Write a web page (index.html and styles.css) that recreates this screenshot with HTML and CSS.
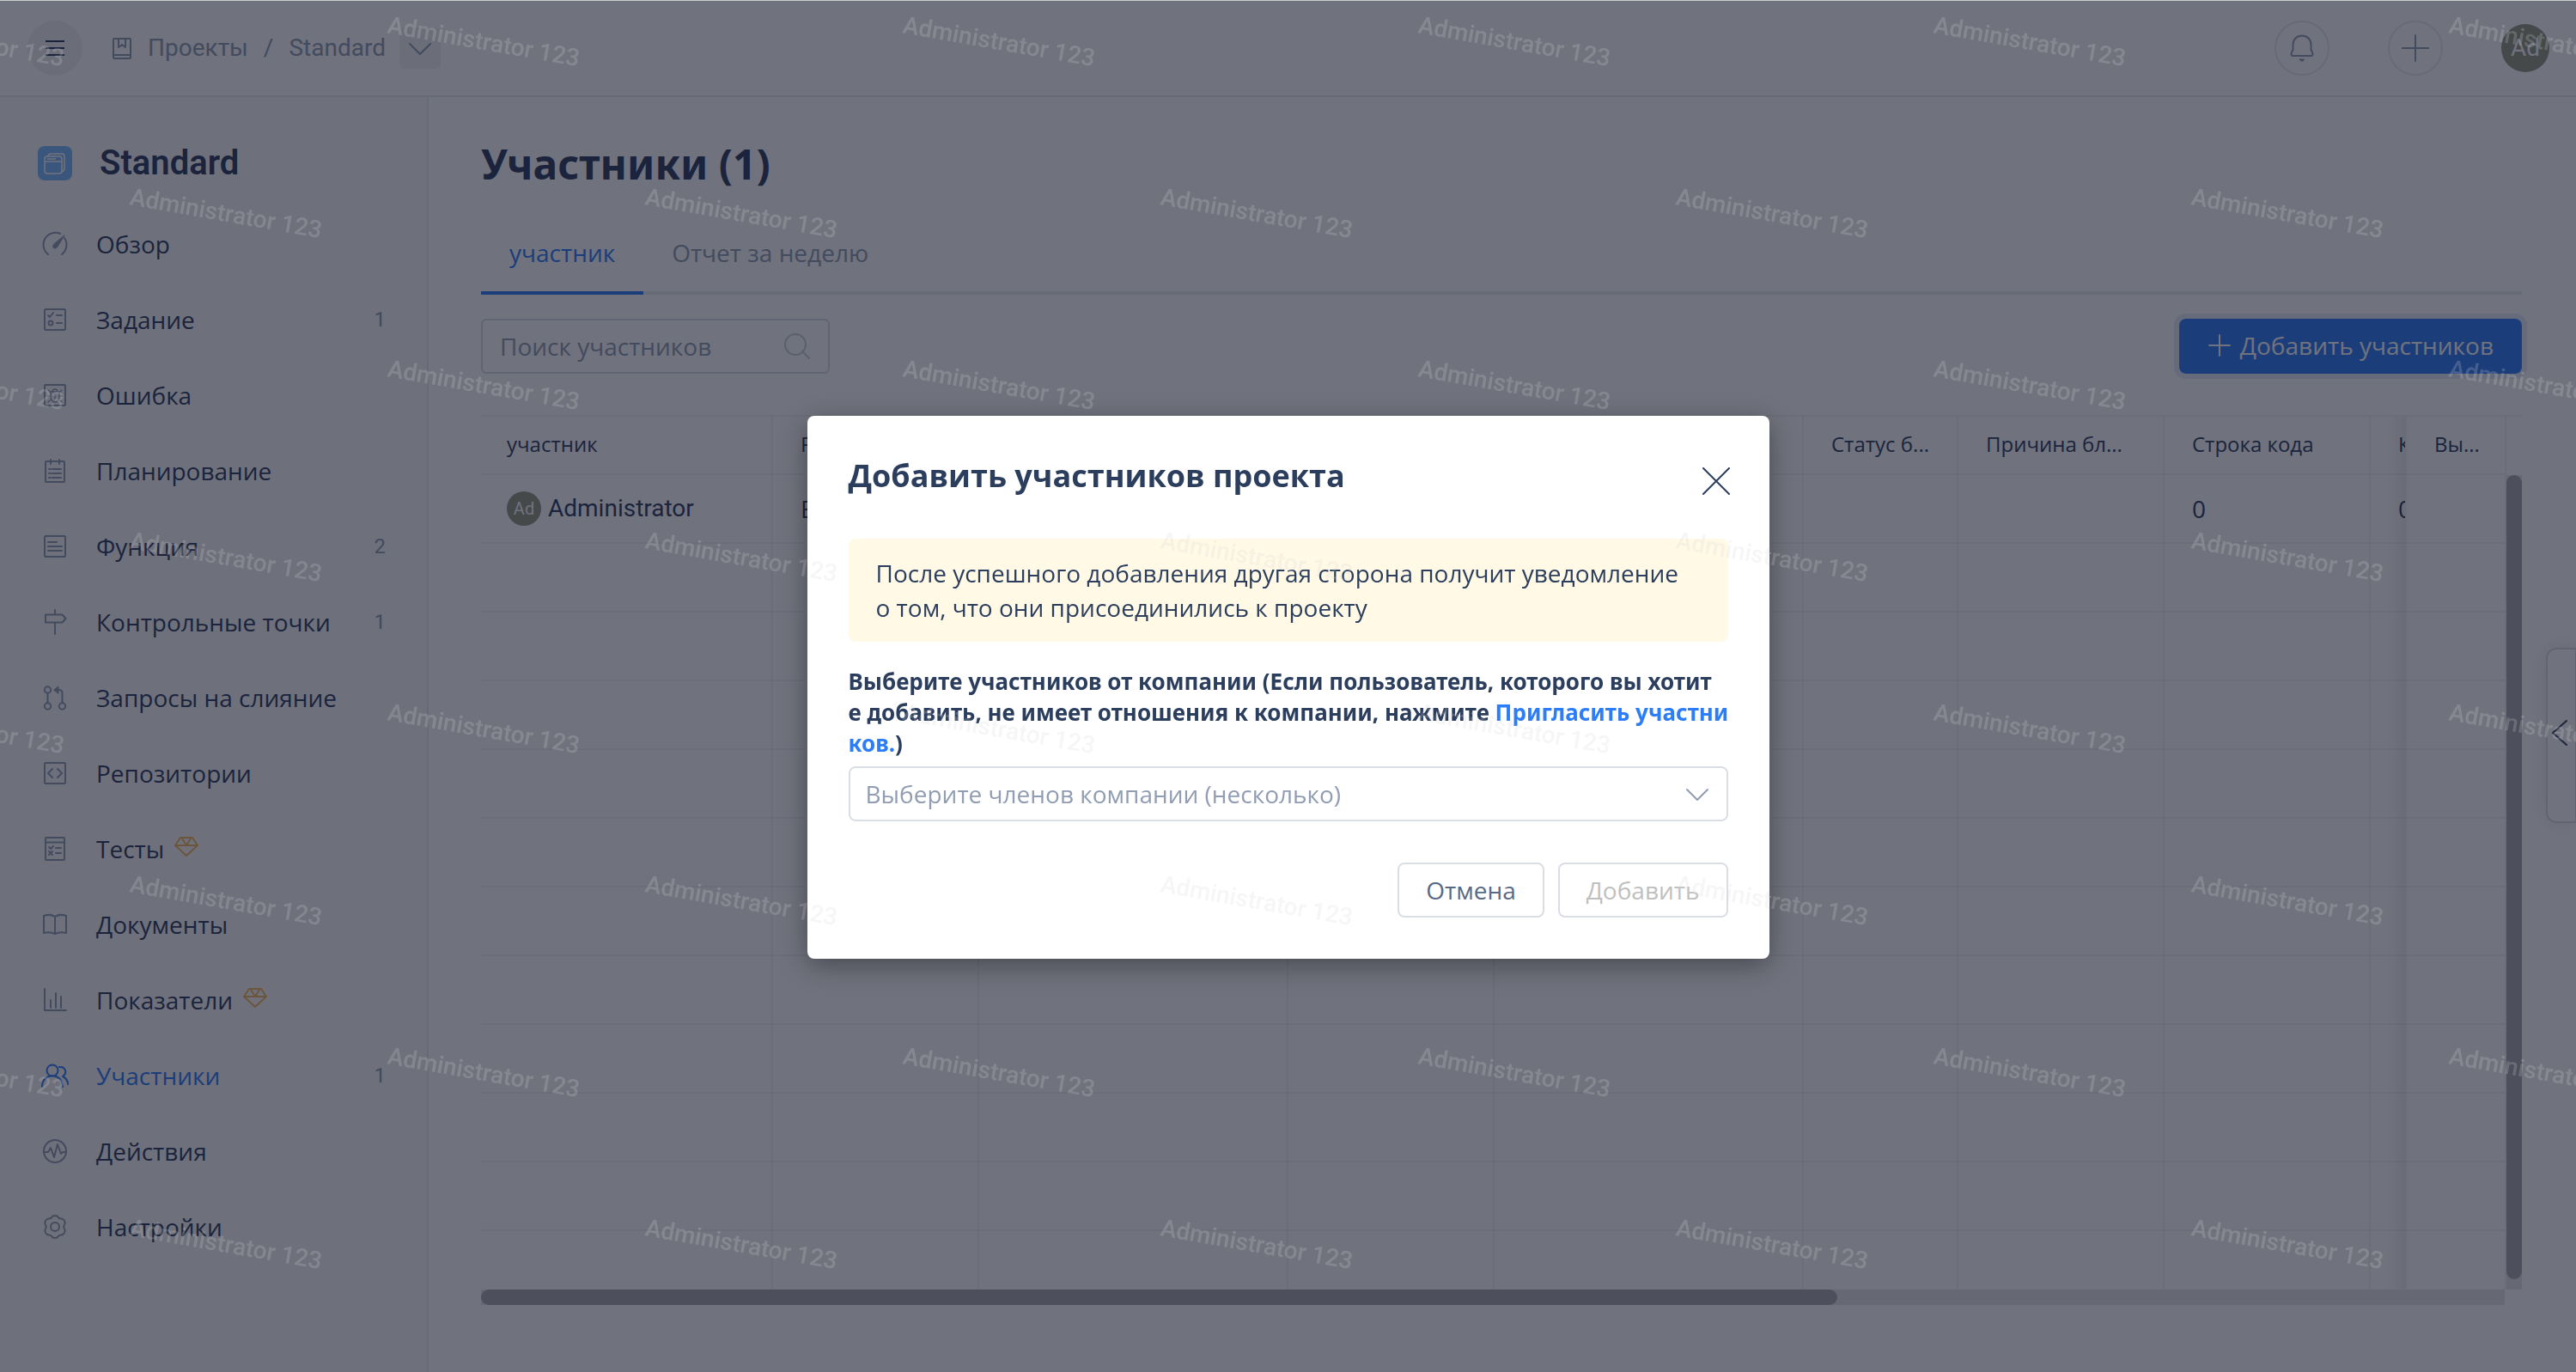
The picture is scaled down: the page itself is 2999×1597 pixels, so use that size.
FILE: index.html
```html
<!DOCTYPE html>
<html lang="ru">
<head>
<meta charset="utf-8">
<title>Standard</title>
<link rel="stylesheet" href="styles.css">
</head>
<body>
<div class="app">
  <header class="topbar">
    <button class="round menu" aria-label="Меню"><svg class="icon" viewBox="0 0 32 32"><path d="M5 8h22M5 16h22M5 24h22"/></svg></button>
    <nav class="crumbs">
      <svg class="icon" viewBox="0 0 32 32"><rect x="6" y="5" width="20" height="23" rx="1"/><path d="M6 24h20M12 5v10l4-3 4 3V5"/></svg>
      <a href="#">Проекты</a><span class="slash">/</span><a href="#">Standard</a>
      <button class="crumb-more" aria-label="Ещё"><svg class="icon" viewBox="0 0 32 32"><path d="M4 11l12 12 12-12"/></svg></button>
    </nav>
    <div class="tools">
      <button class="round outlined" aria-label="Уведомления"><svg class="icon" viewBox="0 0 32 32"><path d="M16 1.500c-6 0-10.500 4.500-10.500 10v6c0 2-2 3-2 5 0 1.500.8 2.500 2.500 2.500h20c1.700 0 2.500-1 2.500-2.500 0-2-2-3-2-5v-6c0-5.500-4.500-10-10.500-10z"/><path class="fill" d="M13.500 29h5c0 1.500-1 2-2.500 2s-2.500-.5-2.500-2z"/></svg></button>
      <button class="round outlined" aria-label="Создать"><svg class="icon" viewBox="0 0 32 32"><path d="M1 16h30M16 1v30"/></svg></button>
      <span class="avatar avatar-lg">Ad</span>
    </div>
  </header>
  <div class="body">
    <aside class="sidebar">
      <div class="project">
        <svg class="logo" viewBox="0 0 40 40"><rect width="40" height="40" rx="8" fill="#78b8ff"/><g fill="none" stroke="#fff" stroke-width="1.500"><rect x="8" y="12" width="20" height="20" rx="3"/><path d="M8 18h20M11 15h10M12 12c0-2 1-3 3-3h13c2 0 3 1 3 3v14c0 2-1 3-3 4"/></g></svg>
        <h2>Standard</h2>
      </div>
      <nav class="menu-list">
        <a href="#"><svg class="icon" viewBox="0 0 32 32"><path d="M8 28A14 14 0 0 1 22 4M27 9a14 14 0 0 1-3 19"/><path class="fill" d="M27 6L19 19c-1 2-4 3-5 1-1-1 0-3 1-4z"/></svg><span>Обзор</span></a>
        <a href="#"><svg class="icon" viewBox="0 0 32 32"><rect x="4" y="4" width="24" height="24" rx="1"/><path d="M8 11l2 2 4-5M18 11h6M18 20h6"/><circle cx="11" cy="20" r="2.500"/></svg><span>Задание</span><b>1</b></a>
        <a href="#"><svg class="icon" viewBox="0 0 32 32"><rect x="4" y="4" width="24" height="24" rx="1"/><g stroke-width="1.300"><path d="M11 12h10v6a5 6 0 0 1-10 0zM13 12c0-4 6-4 6 0M16 14v6M8 10l2 2M24 10l-2 2M7 17h2M23 17h2M8 24l2-2M24 24l-2-2"/></g></svg><span>Ошибка</span></a>
        <a href="#"><svg class="icon" viewBox="0 0 32 32"><rect x="5" y="5" width="22" height="24" rx="1"/><path d="M11 3v5M21 3v5M9 14h2M13 14h10M9 19h2M13 19h10M9 24h2M13 24h10"/></svg><span>Планирование</span></a>
        <a href="#"><svg class="icon" viewBox="0 0 32 32"><rect x="4" y="4" width="24" height="24" rx="1"/><path d="M8 11h10M8 16h16M8 21h16"/></svg><span>Функция</span><b>2</b></a>
        <a href="#"><svg class="icon" viewBox="0 0 32 32"><path d="M16 2v4M16 17v13M5 7.500h19.500l4 4.500-4 4.500H5z"/></svg><span>Контрольные точки</span><b>1</b></a>
        <a href="#"><svg class="icon" viewBox="0 0 32 32"><circle cx="7.500" cy="7" r="3.700"/><circle cx="7.500" cy="26" r="3.700"/><circle cx="24.500" cy="26" r="3.700"/><path d="M7.500 11v11M24.500 22V11c0-3-1-4-4-4"/><path class="fill" d="M15 7l5-4v8z"/></svg><span>Запросы на слияние</span></a>
        <a href="#"><svg class="icon" viewBox="0 0 32 32"><rect x="4" y="4" width="24" height="24" rx="1"/><path d="M13 11l-5 5 5 5M19 11l5 5-5 5"/></svg><span>Репозитории</span></a>
        <a href="#"><svg class="icon" viewBox="0 0 32 32"><rect x="5" y="3" width="22" height="26" rx="1"/><path d="M5 8.500h22M9 14l2 2 3-3M9 19l4 4M13 19l-4 4M17 15h6M17 21h6"/></svg><span>Тесты</span><svg class="gem" viewBox="0 0 28 28"><path d="M7 3h14l6 9-13 12L1 12zM1 12h26M9 4l5 8 5-8"/></svg></a>
        <a href="#"><svg class="icon" viewBox="0 0 32 32"><path d="M3 6c4-1.500 9-1.500 13 1 4-2.500 9-2.500 13-1v20c-4-1-9-1-13 1-4-2-9-2-13-1zM16 7v20"/></svg><span>Документы</span></a>
        <a href="#"><svg class="icon" viewBox="0 0 32 32"><path d="M4 3v25h25M11 25v-9M17 25V8M23 25V12"/></svg><span>Показатели</span><svg class="gem" viewBox="0 0 28 28"><path d="M7 3h14l6 9-13 12L1 12zM1 12h26M9 4l5 8 5-8"/></svg></a>
        <a href="#" class="active"><svg class="icon" viewBox="0 0 32 32"><circle cx="13" cy="10" r="6.500"/><path d="M1 29c0-17 24-17 24 0M21 6c7-1 10 7 4 11 4 2 6 5 6 9"/></svg><span>Участники</span><b>1</b></a>
        <a href="#"><svg class="icon" viewBox="0 0 32 32"><circle cx="16" cy="16" r="13"/><path d="M3 17h5l3-5 4 11 4-15 4 11 2-2h4"/></svg><span>Действия</span></a>
        <a href="#"><svg class="icon" viewBox="0 0 32 32"><circle cx="16" cy="16" r="5"/><path d="M12.500 4.500c1-2 6-2 7 0 .8 1.800 2 2.200 4 2 2.500-.2 5 4 4 6-1.300 1.800-1.300 5 0 7 1 2-1.500 6.200-4 6-2-.2-3.200.2-4 2-1 2-6 2-7 0-.8-1.800-2-2.200-4-2-2.500.2-5-4-4-6 1.300-2 1.300-5.200 0-7-1-2 1.500-6.200 4-6 2 .2 3.200-.2 4-2z"/></svg><span>Настройки</span></a>
      </nav>
    </aside>
    <main class="content">
      <h1>Участники (1)</h1>
      <nav class="tabs"><a href="#" class="active">участник</a><a href="#">Отчет за неделю</a></nav>
      <div class="toolbar">
        <div class="search">
          <input type="text" placeholder="Поиск участников" aria-label="Поиск участников">
          <svg class="icon" viewBox="0 0 32 32"><circle cx="14" cy="14" r="12"/><path d="M22 22l8 8"/></svg>
        </div>
        <button class="primary"><svg class="icon" viewBox="0 0 28 28"><path d="M2 14h24M14 2v24"/></svg>Добавить участников</button>
      </div>
      <div class="grid">
        <div class="viewport">
          <table>
            <colgroup><col class="c340"><col class="c240"><col class="c360"><col class="c240"><col class="c360"><col class="c180"><col class="c240"><col class="c240"><col class="c240"><col class="cfix"></colgroup>
            <thead><tr><th>участник</th><th>Р</th><th></th><th></th><th></th><th>Статус б...</th><th>Причина бл...</th><th>Строка кода</th><th>К</th><th class="fixed">Вы...</th></tr></thead>
            <tbody>
              <tr><td><span class="person"><span class="avatar">Ad</span>Administrator</span></td><td>Е</td><td></td><td></td><td></td><td></td><td></td><td>0</td><td>0</td><td class="fixed"></td></tr>
              <tr><td></td><td></td><td></td><td></td><td></td><td></td><td></td><td></td><td></td><td class="fixed"></td></tr>
              <tr><td></td><td></td><td></td><td></td><td></td><td></td><td></td><td></td><td></td><td class="fixed"></td></tr>
              <tr><td></td><td></td><td></td><td></td><td></td><td></td><td></td><td></td><td></td><td class="fixed"></td></tr>
              <tr><td></td><td></td><td></td><td></td><td></td><td></td><td></td><td></td><td></td><td class="fixed"></td></tr>
              <tr><td></td><td></td><td></td><td></td><td></td><td></td><td></td><td></td><td></td><td class="fixed"></td></tr>
              <tr><td></td><td></td><td></td><td></td><td></td><td></td><td></td><td></td><td></td><td class="fixed"></td></tr>
              <tr><td></td><td></td><td></td><td></td><td></td><td></td><td></td><td></td><td></td><td class="fixed"></td></tr>
              <tr><td></td><td></td><td></td><td></td><td></td><td></td><td></td><td></td><td></td><td class="fixed"></td></tr>
              <tr><td></td><td></td><td></td><td></td><td></td><td></td><td></td><td></td><td></td><td class="fixed"></td></tr>
              <tr><td></td><td></td><td></td><td></td><td></td><td></td><td></td><td></td><td></td><td class="fixed"></td></tr>
              <tr><td></td><td></td><td></td><td></td><td></td><td></td><td></td><td></td><td></td><td class="fixed"></td></tr>
            </tbody>
          </table>
        </div>
        <div class="vbar"><div class="thumb"></div></div>
      </div>
      <div class="hbar"><div class="thumb"></div></div>
    </main>
  </div>
  <button class="handle" aria-label="Развернуть"><svg class="icon" viewBox="0 0 32 32"><path d="M22 2L6 16l16 14"/></svg></button>
</div>

<div class="overlay">
  <section class="modal" role="dialog" aria-labelledby="dlg-title">
    <div class="modal-head">
      <h3 id="dlg-title">Добавить участников проекта</h3>
      <button class="close" aria-label="Закрыть"><svg class="icon" viewBox="0 0 32 32"><path d="M1 1l30 30M31 1L1 31"/></svg></button>
    </div>
    <p class="note">После успешного добавления другая сторона получит уведомление<br>о том, что они присоединились к проекту</p>
    <label for="members">Выберите участников от компании (Если пользователь, которого вы хотит<br>е добавить, не имеет отношения к компании, нажмите <a href="#">Пригласить участни<br>ков.</a>)</label>
    <div class="select">
      <select id="members"><option>Выберите членов компании (несколько)</option></select>
      <svg class="icon" viewBox="0 0 32 32"><path d="M4 11l12 12 12-12"/></svg>
    </div>
    <div class="actions"><button class="btn">Отмена</button><button class="btn" disabled>Добавить</button></div>
  </section>
</div>

<svg class="watermark" aria-hidden="true">
  <defs>
    <pattern id="wm" x="100" y="0" width="600" height="400" patternUnits="userSpaceOnUse">
      <text transform="translate(350 38) rotate(10)">Administrator 123</text>
      <text transform="translate(50 238) rotate(10)">Administrator 123</text>
    </pattern>
  </defs>
  <rect width="100%" height="100%" fill="url(#wm)"/>
</svg>
</body>
</html>
```
FILE: styles.css
```css
:root {
  --ink: #2c3e5d;
  --muted: #909db2;
  --blue: #2c7dfa;
  --line: #e9ebef;
  --cell: #f2f3f6;
  --field: #d9dee5;
}
* { box-sizing: border-box; }
body {
  margin: 0;
  padding-top: 1px;
  height: 100vh;
  overflow: hidden;
  background: #c8d0cb;
  color: var(--ink);
  font: 28px/40px "Open Sans", "Noto Sans", sans-serif;
}
h1, h2, h3, p { margin: 0; }
a { color: inherit; text-decoration: none; }
button, input, select { font: inherit; color: inherit; margin: 0; padding: 0; border: 0; background: none; }
.icon { display: block; flex: none; width: 32px; height: 32px; fill: none; stroke: currentColor; stroke-width: 2; stroke-linecap: round; stroke-linejoin: round; }
.icon .fill { fill: currentColor; stroke-width: 1; }

.app { display: flex; flex-direction: column; height: 100%; background: #fff; }

/* Top bar */
.topbar { display: flex; align-items: center; height: 112px; padding: 0 31px 0 32px; border-bottom: 2px solid var(--line); font-family: Roboto, sans-serif; color: var(--muted); }
.round { display: flex; align-items: center; justify-content: center; width: 64px; height: 64px; border-radius: 50%; }
.menu { background: #f2f3f5; color: var(--ink); }
.menu .icon { stroke-linecap: butt; }
.outlined { border: 2px solid #e9ecf0; }
.crumbs { display: flex; align-items: center; margin-left: 30px; }
.crumbs a { margin-left: 14px; }
.slash { margin-left: 18px; margin-right: 4px; }
.crumb-more { display: flex; align-items: center; justify-content: center; width: 48px; height: 48px; margin-left: 16px; border-radius: 6px; background: #f2f3f5; }
.tools { display: flex; align-items: center; gap: 68px; margin-left: auto; }
.avatar { display: inline-flex; align-items: center; justify-content: center; flex: none; width: 40px; height: 40px; border-radius: 50%; background: #93987f; color: #fff; font: 20px/40px Roboto, sans-serif; }
.avatar-lg { width: 56px; height: 56px; font-size: 28px; }

.body { display: flex; flex: 1; min-height: 0; }

/* Sidebar */
.sidebar { flex: none; width: 499px; padding-top: 49px; border-right: 2px solid var(--line); background: #fafafb; }
.project { display: flex; align-items: center; gap: 32px; height: 56px; margin-bottom: 22px; padding-left: 44px; }
.logo { width: 40px; height: 40px; }
.project h2 { font: 600 40px/56px Roboto, sans-serif; }
.menu-list a { display: flex; align-items: center; height: 88px; padding: 0 48px; }
.menu-list .icon { margin-right: 32px; color: var(--muted); }
.menu-list b { margin-left: auto; color: var(--muted); font: 24px/40px Roboto, sans-serif; }
.menu-list .active, .menu-list .active .icon { color: var(--blue); }
.gem { width: 28px; height: 28px; margin: 0 0 4px 12px; fill: none; stroke: #f6b85a; stroke-width: 2; stroke-linejoin: round; }

/* Content */
.content { display: flex; flex-direction: column; flex: 1; min-width: 0; padding: 50px 63px 78px 61px; }
h1 { font: 700 48px/56px "Noto Sans", sans-serif; }
.tabs { display: flex; margin-top: 55px; box-shadow: inset 0 -4px var(--line); color: var(--muted); }
.tabs a { padding: 0 33px 25px; border-bottom: 4px solid transparent; }
.tabs .active { color: var(--blue); border-color: var(--blue); }
.toolbar { display: flex; justify-content: space-between; margin: 28px 0 48px; line-height: 38px; }
.search { display: flex; align-items: center; width: 406px; height: 64px; padding: 0 20px; border: 2px solid var(--field); border-radius: 6px; }
.search input { flex: 1; min-width: 0; height: 40px; outline: 0; }
.search input::placeholder { color: var(--muted); opacity: 1; }
.search .icon { color: #c9d0da; }
.primary { display: flex; align-items: center; gap: 10px; height: 64px; padding: 0 33px 2px; border-radius: 8px; background: var(--blue); color: #fff; box-shadow: 0 0 0 6px #e3edf8; }
.primary .icon { width: 28px; height: 28px; }

/* Members grid */
.grid { display: flex; flex: 1; min-height: 0; border-top: 2px solid var(--cell); }
.viewport { position: relative; flex: 1; min-width: 0; overflow: hidden; }
.viewport::after { content: ""; position: absolute; top: 0; bottom: 0; right: 118px; width: 20px; background: linear-gradient(to right, rgba(0,0,0,0), rgba(0,0,0,.06)); }
table { table-layout: fixed; width: 2558px; border-collapse: separate; border-spacing: 0; }
.c180 { width: 180px; }
.c240 { width: 240px; }
.c340 { width: 340px; }
.c360 { width: 360px; }
.cfix { width: 118px; }
th, td { height: 80px; padding: 0 0 0 32px; border-right: 2px solid var(--cell); border-bottom: 2px solid var(--cell); text-align: left; white-space: nowrap; }
th { height: 68px; padding-bottom: 2px; font-size: 24px; font-weight: 400; }
th:first-child, td:first-child { padding-left: 30px; }
.fixed { position: sticky; right: 0; border-left: 2px solid var(--cell); background: #fff; }
.person { display: flex; align-items: center; gap: 8px; font-family: Roboto, sans-serif; }
.thumb { border-radius: 9px; background: #a9a9ac; }
.vbar { width: 18px; margin-top: 68px; background: #e6e6e8; }
.vbar .thumb { height: calc(100% - 12px); }
.hbar { height: 18px; margin-right: 20px; background: #e6e6e8; }
.hbar .thumb { width: 67%; height: 18px; }

.handle { position: fixed; right: 0; top: calc(50% - 45px); display: flex; align-items: center; width: 35px; height: 204px; padding-bottom: 6px; border: 2px solid #dcdee2; border-right-width: 1px; border-radius: 12px 0 0 12px; background: #fff; box-shadow: 0 0 24px rgba(0,0,0,.1); }

/* Dialog */
.overlay { position: fixed; inset: 3px 0 0; display: flex; align-items: center; justify-content: center; }
.overlay::before { content: ""; position: fixed; inset: 1px 0 0; background: rgba(17,20,38,.6); }
.modal { position: relative; width: 1120px; padding: 48px; border-radius: 8px; background: #fff; box-shadow: 0 8px 32px rgba(0,0,0,.36); }
.modal-head { display: flex; justify-content: space-between; align-items: flex-start; height: 44px; margin: 0 -2px 51px 0; }
h3 { font-size: 36px; line-height: 44px; font-weight: 700; }
.close { padding-top: 12px; }
.note { padding: 20px 32px; border-radius: 8px; background: #fff9e6; }
label { display: block; margin: 28px 0 9px; font: 700 26px/36px "Noto Sans", sans-serif; white-space: nowrap; }
label a { color: var(--blue); }
.select { display: grid; align-items: center; color: var(--muted); }
.select > * { grid-area: 1 / 1; }
.select select { width: 100%; height: 64px; padding: 0 18px; appearance: none; border: 2px solid var(--field); border-radius: 8px; background: #fff; }
.select .icon { justify-self: end; margin-right: 20px; pointer-events: none; }
.actions { display: flex; justify-content: flex-end; gap: 16px; margin-top: 48px; }
.btn { height: 64px; padding: 0 31px; border: 2px solid var(--field); border-radius: 8px; background: #fff; color: #586a86; }
.btn:disabled { color: #bfbfbf; }

.watermark { position: fixed; inset: 0; width: 100%; height: 100%; pointer-events: none; }
.watermark text { font: 500 28px Roboto, sans-serif; fill: rgba(215,215,215,.22); }
```
